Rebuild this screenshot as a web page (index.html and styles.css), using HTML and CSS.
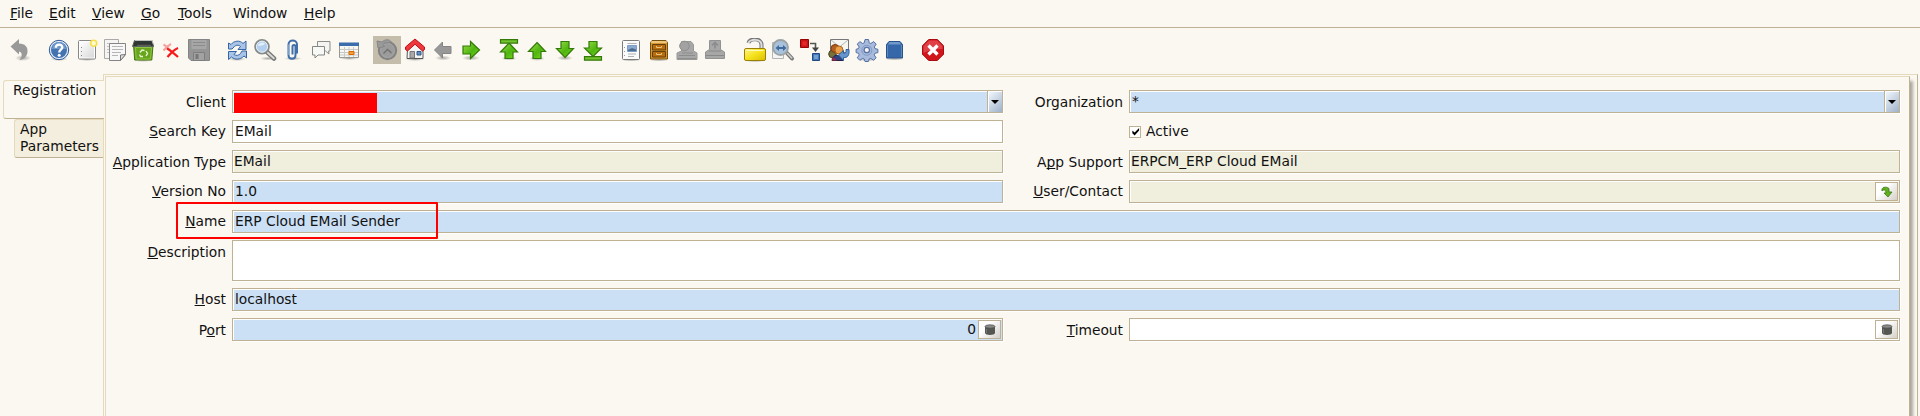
FILE: index.html
```html
<!DOCTYPE html>
<html lang="en">
<head>
<meta charset="utf-8">
<title>Registration</title>
<link rel="stylesheet" href="styles.css">
</head>
<body>
<svg class="defs" width="0" height="0" aria-hidden="true">
  <defs>
    <linearGradient id="green" x1="0" y1="0" x2="1" y2="1"><stop offset="0" stop-color="#9be04c"/><stop offset=".55" stop-color="#4fb50f"/><stop offset="1" stop-color="#7bdb25"/></linearGradient>
    <linearGradient id="paper" x1="0" y1="0" x2="1" y2="1"><stop offset="0" stop-color="#fff"/><stop offset="1" stop-color="#d8d8d8"/></linearGradient>
    <linearGradient id="yellow" x1="0" y1="0" x2="1" y2="1"><stop offset="0" stop-color="#fff58a"/><stop offset=".5" stop-color="#f5e21c"/><stop offset="1" stop-color="#dcbc00"/></linearGradient>
    <radialGradient id="shade"><stop offset="0" stop-color="#000" stop-opacity=".32"/><stop offset="1" stop-color="#000" stop-opacity="0"/></radialGradient>
  </defs>
</svg>
<nav class="menubar">
  <span class="menu m-file"><u>F</u>ile</span>
  <span class="menu m-edit"><u>E</u>dit</span>
  <span class="menu m-view"><u>V</u>iew</span>
  <span class="menu m-go"><u>G</u>o</span>
  <span class="menu m-tools"><u>T</u>ools</span>
  <span class="menu m-window">Window</span>
  <span class="menu m-help"><u>H</u>elp</span>
</nav>
<div class="toolbar">
  <div class="group">
    <span class="tool"><svg viewBox="0 0 24 24"><ellipse cx="14" cy="20" rx="8" ry="3" fill="url(#shade)"/><path d="M1.500 8.500 10 1v4.500c6 0 9 3.500 8.500 8.500-.4 4-3 7-8 8.500 2.600-3.500 3.500-8.500-.5-9v3z" fill="#999"/></svg></span>
  </div>
  <div class="group">
    <span class="tool"><svg viewBox="0 0 24 24"><ellipse cx="12" cy="21" rx="9" ry="2" fill="url(#shade)"/><circle cx="12" cy="12" r="9.700" fill="#e4edf7" stroke="#2f5b98"/><circle cx="12" cy="12" r="8" fill="#4473b2"/><path d="M5 11a7 7 0 0 1 14 0z" fill="#6f98ca"/><path d="M8.800 9.800C8.800 5.500 15.500 5.600 15.300 9.500c-.1 2-3.100 2.400-3.100 5" fill="none" stroke="#fff" stroke-width="2.300"/><circle cx="12.200" cy="17.200" r="1.500" fill="#fff"/></svg></span>
    <span class="tool"><svg viewBox="0 0 24 24"><ellipse cx="12" cy="21.500" rx="9" ry="1.500" fill="url(#shade)"/><rect x="3.500" y="2.500" width="17" height="18.500" rx="1" fill="#fff" stroke="#888"/><rect x="5" y="4" width="14" height="15.500" fill="url(#paper)"/><path d="M6.500 9v1m0 3v1m0 3v1" stroke="#888"/><circle cx="18.700" cy="5.200" r="3" fill="#fffbd0" stroke="#f5e04a" stroke-width="1.600"/></svg></span>
    <span class="tool"><svg viewBox="0 0 24 24"><path d="M1.500 1.500h14v19h-14z" fill="#f4f4f2" stroke="#aaa"/><path d="M4 5.500h9M4 8.500h5M4 11.500h5M4 14.500h5" stroke="#c2c2c2"/><path d="M6.500 5.500h16v11l-5 6h-11z" fill="#f7f7f7" stroke="#858585"/><path d="M22.500 16.500l-5 .5v5.500z" fill="#ddd" stroke="#777"/><path d="M9 8.500h11M9 11.500h11M9 14.500h9M9 17.500h6" stroke="#b5b5b5"/></svg></span>
    <span class="tool"><svg viewBox="0 0 24 24"><ellipse cx="12" cy="22" rx="10" ry="2" fill="url(#shade)"/><path d="M2.500 7h19.500l-1.200 15H3.700z" fill="#69a51c" stroke="#447310"/><path d="M4.500 9.500h16l-.9 11.500H5.200z" fill="none" stroke="#8fc545"/><path d="M3.500 2.500h17.500l1.500 6h-21z" fill="#303633" stroke="#5c625e"/><path d="M4 2.500h17l1 3" fill="none" stroke="#bfc4bf"/><path d="M6 7.500h14" stroke="#585e59" stroke-width="1.500"/><path d="M9 14.500l2-2.500 2.500.5M15 13l1.500 2.500-1.500 2.500M12 18.500H9.500L8.500 16.500" fill="none" stroke="#e4f4ce" stroke-width="1.400"/></svg></span>
    <span class="tool"><svg viewBox="0 0 24 24"><path d="M4.500 6.500c3 1.500 5 4 8 7M12 6c-2 1-5 3.500-7.500 6.500" stroke="#f5a3a0" stroke-width="2" fill="none"/><path d="M8 10.500c3 1.500 7 5 11 8.500M19 10c-4 1.500-7 5-10.500 9" stroke="#f51b1b" stroke-width="2.300" fill="none"/></svg></span>
    <span class="tool"><svg viewBox="0 0 24 24"><path d="M1.500 1.500h21v21H4l-2.500-2.500z" fill="#959595" stroke="#858585"/><path d="M4.500 2h15v9h-15z" fill="#a6a6a6"/><path d="M6 4.500h12M6 7.500h12" stroke="#8b8b8b"/><path d="M6.500 14.500h11v8h-11z" fill="#a2a2a2" stroke="#7e7e7e"/><path d="M8.500 16h3v5h-3z" fill="#777"/></svg></span>
  </div>
  <div class="group">
    <span class="tool"><svg viewBox="0 0 24 24"><ellipse cx="12" cy="21" rx="9" ry="2" fill="url(#shade)"/><path d="M3.500 11V5l2.500 1.500C9 2.500 15 2 18 5.500L21 3v8.500h-8l2.500-3c-2-2-5-1.500-6.500.5L7 11z" fill="#a9c4e6" stroke="#3465a4"/><path d="M21.500 13v7l-2.500-2c-4 4-9 4-12.500 1L3.500 21.500v-8h8l-2.500 3c2 1.500 5 1 6.500-1l1.500-2.500z" fill="#a9c4e6" stroke="#3465a4"/></svg></span>
    <span class="tool"><svg viewBox="0 0 24 24"><ellipse cx="15" cy="20.500" rx="8" ry="2" fill="url(#shade)"/><path d="M13.500 13.500l7.500 7" stroke="#777" stroke-width="4.500" stroke-linecap="round"/><path d="M14.500 14.500l6.300 5.800" stroke="#d8d8d5" stroke-width="2" stroke-linecap="round"/><circle cx="9" cy="8.700" r="6.800" fill="#b2cfef" stroke="#868a86" stroke-width="2"/><circle cx="9" cy="8.700" r="5.600" fill="none" stroke="#e8f1fa"/><path d="M5 8c.5-3.500 5-4.500 7-2-2 2-4 1.500-7 2z" fill="#e2eefa"/></svg></span>
    <span class="tool"><svg viewBox="0 0 24 24"><ellipse cx="12" cy="20.500" rx="9" ry="1.800" fill="url(#shade)"/><path d="M11.500 16.500v-8c0-2 3-2 3 0v8.500c0 5-7 5-7 0V6.500c0-5.500 8.500-5.500 8.500 0v9" fill="none" stroke="#3f6eaa" stroke-width="2"/><path d="M7.500 17V6.500" stroke="#86a9d3" stroke-width=".8"/></svg></span>
    <span class="tool"><svg viewBox="0 0 24 24"><path d="M8.500 3.500h12.500v9.500h-1.500l.5 3-3.500-3h-8z" fill="#f4f4f3" stroke="#8b8d89"/><path d="M3.500 8.500h12v8.500H9l-3 3v-3H3.500z" fill="#f8f8f7" stroke="#858783"/></svg></span>
    <span class="tool"><svg viewBox="0 0 24 24"><ellipse cx="12" cy="20.500" rx="10" ry="1.500" fill="url(#shade)"/><path d="M2.500 5.500h19v14h-19z" fill="#f6f6f3" stroke="#969894"/><path d="M2 4.500h20v3.500H2z" fill="#3b6cac"/><path d="M3 11.500h18M3 14.500h18M3 17h18M7.500 9v10M12 9v10M16.500 9v10" stroke="#c9cac6"/><path d="M12 13.500h5v3h-5z" fill="#f79c3a" stroke="#d56b00"/></svg></span>
  </div>
  <div class="group">
    <span class="tool pressed"><svg viewBox="0 0 24 24"><circle cx="12.500" cy="12.500" r="8.700" fill="#9b9b9b" stroke="#828282" stroke-width="2"/><circle cx="12.500" cy="12.500" r="6.800" fill="none" stroke="#a5a5a5"/><path d="M2 3l5 1c3-3 8-3 9 0l-4 1c-2-.5-3 0-4 1.500l1.500 2L3 10z" fill="#9a9a9a" stroke="#868686"/><path d="M8.500 15.500l4-4 4 3.500" fill="none" stroke="#707070" stroke-width="1.300"/></svg></span>
    <span class="tool"><svg viewBox="0 0 24 24"><ellipse cx="12" cy="21.500" rx="10" ry="1.500" fill="url(#shade)"/><path d="M4.500 10L12 4l8 6v10.500h-16z" fill="#f5f5f4" stroke="#555"/><path d="M7 13.500h4.500V20H7z" fill="#aaa" stroke="#777"/><path d="M14 13.500h4v3.500h-4z" fill="#6791c5" stroke="#315788"/><path d="M2.500 11.500V9L12 1l9.500 8v2.500L19.500 13 12 6.200 4.500 13z" fill="#ee383d" stroke="#bd1015"/></svg></span>
    <span class="tool"><svg viewBox="0 0 24 24"><ellipse cx="12" cy="20" rx="8" ry="2.500" fill="url(#shade)"/><path d="M3.500 12l8-8v4.500h8.500v7h-8.500V20z" fill="#989898" stroke="#858585"/></svg></span>
    <span class="tool"><svg viewBox="0 0 24 24"><ellipse cx="12" cy="20" rx="9" ry="2.500" fill="url(#shade)"/><path d="M20.500 12l-9-8.500V8H4v8h7.500v4.500z" fill="url(#green)" stroke="#347a08" stroke-width="1.200"/></svg></span>
  </div>
  <div class="group">
    <span class="tool"><svg viewBox="0 0 24 24"><ellipse cx="12" cy="20.500" rx="8" ry="2" fill="url(#shade)"/><path d="M12 5l8.500 9H16v6.500H8V14H3.500z" fill="url(#green)" stroke="#347a08" stroke-width="1.200"/><path d="M3.500 1.600h17v3.500h-17z" fill="#72c52f" stroke="#347a08" stroke-width="1.200"/></svg></span>
    <span class="tool"><svg viewBox="0 0 24 24"><ellipse cx="12" cy="20.500" rx="8" ry="2.500" fill="url(#shade)"/><path d="M12 4.500l8.500 9H16v7H8v-7H3.500z" fill="url(#green)" stroke="#347a08" stroke-width="1.200"/></svg></span>
    <span class="tool"><svg viewBox="0 0 24 24"><ellipse cx="12" cy="20" rx="8" ry="2.500" fill="url(#shade)"/><path d="M12 19.500l8.500-9H16v-7H8v7H3.500z" fill="url(#green)" stroke="#347a08" stroke-width="1.200"/></svg></span>
    <span class="tool"><svg viewBox="0 0 24 24"><path d="M12 18.500l8.500-8.500H16V3.500H8V10H3.500z" fill="url(#green)" stroke="#347a08" stroke-width="1.200"/><path d="M3.500 18.700h17v3.500h-17z" fill="#72c52f" stroke="#347a08" stroke-width="1.200"/></svg></span>
  </div>
  <div class="group wide">
    <span class="tool"><svg viewBox="0 0 24 24"><ellipse cx="12" cy="22" rx="10" ry="1.500" fill="url(#shade)"/><rect x="3.500" y="2.500" width="17" height="19" rx="1" fill="#fbfbfb" stroke="#7b7d7a"/><path d="M8.500 5.500h9M9 16h8M9 18.500h6" stroke="#b0b0b0"/><path d="M5.500 9v1m0 3v1m0 3v1" stroke="#999"/><path d="M8.500 7.500h9v6h-9z" fill="#8aaad0" stroke="#7c9cc6"/><path d="M9 12l4-2 4 1.500v1.500H9z" fill="#4c6d90"/></svg></span>
    <span class="tool"><svg viewBox="0 0 24 24"><ellipse cx="12" cy="22" rx="10" ry="1.500" fill="url(#shade)"/><path d="M5 2.500h14l1.500 2V21h-17V4.500z" fill="#d79531" stroke="#76500c"/><path d="M4.500 3h15l.5 2H4z" fill="#edc67c"/><path d="M5.500 6.500h13v5.500h-13zM5.500 13.500h13V19h-13z" fill="#b96c0d" stroke="#65420a"/><path d="M9.500 8v1.500h5V8M9.500 15v1.500h5V15" fill="none" stroke="#e8c27b"/></svg></span>
    <span class="tool"><svg viewBox="0 0 24 24"><path d="M6.500 3.500h9.500l2.500 3v6.500l3.500 2v6.500h-20V15l4.500-2z" fill="#a7a7a7" stroke="#989898"/><circle cx="9.500" cy="8" r="4.800" fill="#a2a2a2" stroke="#8e8e8e"/><path d="M4 17.500h16M7 15h11" stroke="#8c8c8c"/><path d="M3 20.500h18" stroke="#8e8e8e"/></svg></span>
    <span class="tool"><svg viewBox="0 0 24 24"><path d="M6.500 2.500h11v9l4 2.500v6.500h-19V14l4-2.500z" fill="#a7a7a7" stroke="#929292"/><path d="M12 4.500v6M9 7.500l3-3 3 3" fill="none" stroke="#8b8b8b" stroke-width="1.600"/><path d="M6 13h12M3 17.500h18" stroke="#888"/></svg></span>
  </div>
  <div class="group">
    <span class="tool"><svg viewBox="0 0 24 24"><path d="M5.500 5c1-5 13-5.500 13 2v5" fill="none" stroke="#777" stroke-width="4"/><path d="M5.500 5c1-4 13-5 13 2v5" fill="none" stroke="#dedede" stroke-width="2"/><ellipse cx="12" cy="23" rx="10" ry="1" fill="url(#shade)"/><rect x="1.500" y="10.500" width="21" height="12" rx="1.500" fill="url(#yellow)" stroke="#9b8007"/><path d="M3.500 12.500h17" stroke="#fffbb4"/></svg></span>
    <span class="tool"><svg viewBox="0 0 24 24"><path d="M1.500 4.500h11v16h-11z" fill="#f4f4f4" stroke="#b4b4b4"/><path d="M15 14l6 6.500" stroke="#777" stroke-width="4" stroke-linecap="round"/><path d="M16.500 15.500l4.300 4.500" stroke="#cfcfcf" stroke-width="1.600" stroke-linecap="round"/><circle cx="9.500" cy="9.500" r="7.500" fill="#a9c2dc" stroke="#9da2a3" stroke-width="1.800"/><path d="M4.500 10l3.500-3v2h4V7l3.500 3-3.500 3v-2H8v2z" fill="#416b9e"/></svg></span>
    <span class="tool"><svg viewBox="0 0 24 24"><path d="M1.500 1.500h8v8h-8z" fill="#c81414" stroke="#900"/><path d="M3.500 3.500h4v4h-4z" fill="#e42828"/><path d="M11 5.500h5.500V11" fill="none" stroke="#555753" stroke-width="1.600"/><path d="M13 9.500h7L16.500 14z" fill="#444"/><path d="M13.500 15.500h7v7h-7z" fill="#4378b7" stroke="#204a87"/><path d="M15 17h4v4h-4z" fill="#729fcf"/></svg></span>
    <span class="tool"><svg viewBox="0 0 24 24"><path d="M3.500 1.500h18v13h-18z" fill="#f5f5f2" stroke="#777"/><path d="M4 2l8.500 7L21 2M4 14l5-6" fill="none" stroke="#b4b4b0"/><circle cx="5.500" cy="16" r="3.800" fill="#75703c" stroke="#474319"/><path d="M5 22.500c.5-5 4-6 8-4.500l3 4.500z" fill="#31427e" stroke="#292447"/><circle cx="8" cy="10.500" r="4" fill="#b55c20" stroke="#7f3c0c"/><circle cx="12" cy="12" r="4" fill="#eba04b" stroke="#ae671d"/><path d="M6 19l4 3.500H5z" fill="#a62946"/><path d="M11.500 17l5-4.500v3c2 0 3-1 2.500-4h3c.5 6-1.500 8.500-5.500 8v3z" fill="#6796ce" stroke="#2e5f9d"/></svg></span>
    <span class="tool"><svg viewBox="0 0 24 24"><ellipse cx="12" cy="21.500" rx="9" ry="2" fill="url(#shade)"/><path d="M10 1.500h3.500l.7 3.300 1.600.7 2.900-1.900 2.500 2.500-1.900 2.900.7 1.600 2.900.7v3.300l-3 .7-.7 1.600 1.900 2.900-2.500 2.500-2.900-1.900-1.600.7-.7 2.400H10l-.7-2.400-1.600-.7-2.900 1.900-2.500-2.500 1.900-2.900-.7-1.600-2.400-.7v-3.300l2.400-.7.700-1.600-1.900-2.900 2.500-2.500 2.900 1.900 1.600-.7z" fill="#a8bbdd" stroke="#5470a4"/><circle cx="11.800" cy="12.300" r="5" fill="none" stroke="#8098c4"/><circle cx="11.800" cy="12" r="2.700" fill="#fbf8f0" stroke="#5873a6" stroke-width="1.300"/></svg></span>
    <span class="tool"><svg viewBox="0 0 24 24"><ellipse cx="11.500" cy="21" rx="10" ry="1.500" fill="url(#shade)"/><path d="M6 3.500h11l2.500 3v13.500h-16V6.500z" fill="#3667a8" stroke="#28528b"/><path d="M6.500 4h10l1.500 2.500H5z" fill="#7299cb"/><path d="M4.500 7v12M18.500 7v12" stroke="#5d89bf"/></svg></span>
  </div>
  <div class="group">
    <span class="tool"><svg viewBox="0 0 24 24"><path d="M7.700 1.500h8.600l6.200 6.200v8.600l-6.200 6.200H7.700l-6.200-6.200V7.700z" fill="#d0151b" stroke="#aa0b10"/><path d="M8 2.500h8L21.500 8v3C15 11 9 12 2.500 15V8z" fill="#df4146"/><path d="M7.500 7.500l9 9M16.500 7.500l-9 9" stroke="#fff" stroke-width="3.300"/></svg></span>
  </div>
</div>
<main class="workspace">
  <aside class="tabs">
    <div class="tab selected">Registration</div>
    <div class="tab child">App<br>Parameters</div>
  </aside>
  <div class="outer">
    <section class="panel">
      <div class="form">
        <label class="low">Client</label>
        <div class="field required combo"><span class="value"><span class="redacted"></span></span><span class="drop"></span></div>
        <label class="low">Organization</label>
        <div class="field required combo"><span class="value">*</span><span class="drop"></span></div>

        <label><u>S</u>earch Key</label>
        <div class="field">EMail</div>
        <span></span>
        <div class="check"><span class="box"><svg viewBox="0 0 10 10"><path d="M1.500 4v3L4 9.500 9 4V1L4 6z"/></svg></span>Active</div>

        <label class="low"><u>A</u>pplication Type</label>
        <div class="field readonly">EMail</div>
        <label class="low">A<u>p</u>p Support</label>
        <div class="field readonly">ERPCM_ERP Cloud EMail</div>

        <label><u>V</u>ersion No</label>
        <div class="field required">1.0</div>
        <label><u>U</u>ser/Contact</label>
        <div class="field readonly with-button"><span class="value"></span><span class="button"><svg viewBox="0 0 12 12"><path d="M1 5C0 1 5 0 8 2.500V6h3L7 11 3 7h2C5 4 3 3 1 5z" fill="#61ae22" stroke="#397a12" stroke-width=".8"/></svg></span></div>

        <label><u>N</u>ame</label>
        <div class="field required full">ERP Cloud EMail Sender<span class="highlight"></span></div>

        <label class="low"><u>D</u>escription</label>
        <div class="field full tall"></div>

        <label><u>H</u>ost</label>
        <div class="field required full">localhost</div>

        <label class="low">P<u>o</u>rt</label>
        <div class="field required with-button"><span class="value number">0</span><span class="button"><svg viewBox="0 0 12 12"><path d="M1 2.500h10V9c0 2.500-10 2.500-10 0z" fill="#555753"/><ellipse cx="6" cy="2.500" rx="5" ry="1.700" fill="#8a8c88" stroke="#4a4c49" stroke-width=".7"/><path d="M2.500 5v4" stroke="#777"/></svg></span></div>
        <label class="low"><u>T</u>imeout</label>
        <div class="field with-button"><span class="value"></span><span class="button"><svg viewBox="0 0 12 12"><path d="M1 2.500h10V9c0 2.500-10 2.500-10 0z" fill="#555753"/><ellipse cx="6" cy="2.500" rx="5" ry="1.700" fill="#8a8c88" stroke="#4a4c49" stroke-width=".7"/><path d="M2.500 5v4" stroke="#777"/></svg></span></div>
      </div>
    </section>
  </div>
</main>
</body>
</html>
```
FILE: styles.css
```css
* { box-sizing: border-box; }
html, body { height: 100%; overflow: hidden; }
body {
  margin: 0;
  display: flex;
  flex-direction: column;
  background: #fbf8f1;
  color: #111;
  font: 13.8px/16px "DejaVu Sans", Verdana, sans-serif;
  white-space: nowrap;
}
.defs { display: block; flex: none; height: 0; }
u { text-decoration: underline; text-decoration-skip-ink: none; text-decoration-thickness: 1px; text-underline-offset: 1px; }

.menubar { display: flex; flex: none; height: 28px; padding: 5px 0 0 10px; border-bottom: 1px solid #bfb294; }
.m-file { width: 39px; }
.m-edit { width: 43px; }
.m-view { width: 49px; }
.m-go { width: 37px; }
.m-tools { width: 55px; }
.m-window { width: 71px; }

.toolbar { display: flex; flex: none; gap: 10px; height: 46px; padding: 8px 0 0 7px; }
.group { display: flex; height: 28px; }
.wide { margin-right: 2px; }
.tool { display: grid; place-items: center; width: 28px; height: 28px; }
.tool svg { width: 24px; height: 24px; }
.pressed { background: #c5bdac; }

.workspace { display: flex; flex: 1; min-height: 0; }
.tabs { width: 103px; flex: none; padding: 6px 0 0 3px; z-index: 1; }
.tab { border: 1px solid #e6dabc; border-right: 0; border-bottom-color: #bfb294; border-radius: 3px 0 0 3px; height: 39px; line-height: 17px; }
.selected { margin-right: -1px; padding: 1px 0 0 9px; background: #fbf8f1; }
.child { margin-left: 11px; padding: 1px 0 0 5px; background: #f3eedd; }

.outer { flex: 1; margin-right: 2px; padding: 1px 7px 0 1px; border: 1px solid #e6dabc; border-right-color: #bfb294; border-bottom: 0; }
.panel { height: 100%; border: 1px solid #e6dabc; border-right-color: #bfb294; border-bottom: 0; box-shadow: 3px 5px 3px #aaa69f; clip-path: inset(0 -7px 0 0); }
.form { display: grid; grid-template-columns: 126px 771px 126px 771px; row-gap: 7px; padding-top: 13px; }
label { text-align: right; padding-right: 6px; line-height: 23px; height: 23px; }
label.low { padding-top: 1px; }
.field { display: block; height: 23px; line-height: 21px; padding-left: 2px; border: 1px solid #bfb294; background: #fff; box-shadow: inset 1px 1px #fff, 1px 1px #fff; position: relative; }
.required { background: #cce0f5; }
.readonly { padding-left: 1px; background: #f0efde; }
.full { grid-column: 2 / 5; }
.tall { height: 41px; }
.combo, .with-button { display: flex; }
.value { flex: 1; }
.number { text-align: right; padding-right: 2px; }
.redacted { display: block; width: 143px; height: 20px; margin: 2px 0 0 -1px; background: #f00; }
.drop { display: grid; place-items: center; width: 15px; height: 21px; border-left: 1px solid #bfb294; background: linear-gradient(135deg, #f6faff, #9eb2c9); box-shadow: inset 1px 1px #fff; }
.drop::after { content: ""; border: 4px solid transparent; border-top-color: #000; border-bottom: 0; }
.button { display: grid; place-items: center; width: 23px; height: 19px; margin: 1px 1px 0 0; border: 1px solid #bfb294; background: linear-gradient(135deg, #fff 35%, #d4cfc8); }
.button svg { width: 12px; height: 12px; }
.check { display: flex; align-items: center; height: 23px; line-height: 23px; }
.box { display: grid; place-items: center; width: 12px; height: 12px; margin-right: 5px; border: 1px solid #bfb294; background: #fff; }
.box svg { width: 9px; height: 9px; }
.highlight { position: absolute; left: -57px; top: -9px; width: 262px; height: 37px; border: 2px solid #f00; border-radius: 1px; z-index: 1; }
```
